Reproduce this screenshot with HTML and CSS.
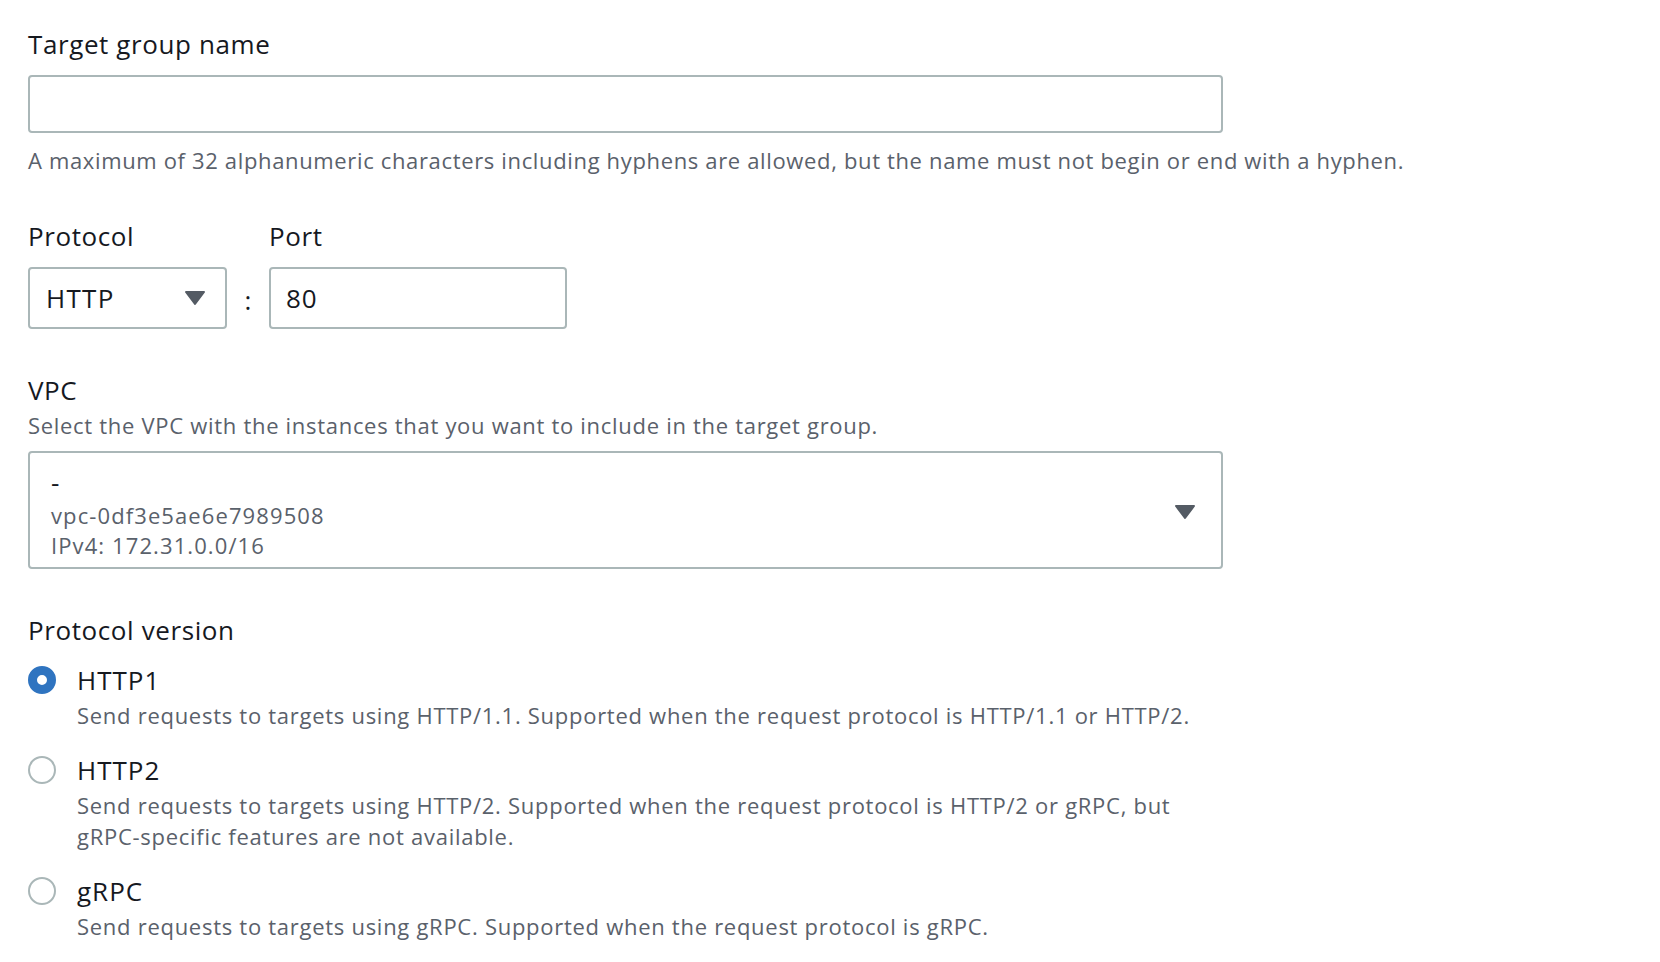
FILE: index.html
```html
<!DOCTYPE html>
<html lang="en">

<head>
    <meta charset="UTF-8">
    <meta name="viewport" content="width=device-width, initial-scale=1.0">
    <title>Target group</title>
    <link rel="stylesheet" href="styles.css">
</head>

<body>
    <div class="form">
        <div class="field">
            <label class="label" for="tg-name">Target group name</label>
            <input class="text-input name-input" id="tg-name" type="text">
            <p class="hint">A maximum of 32 alphanumeric characters including hyphens are allowed, but the name must not begin or end with a hyphen.</p>
        </div>

        <div class="field proto-port">
            <span class="label">Protocol</span>
            <span></span>
            <span class="label">Port</span>
            <div class="select proto-select">
                <span class="value">HTTP</span>
                <svg class="caret" width="22" height="16" viewBox="0 0 22 16"><path d="M2 2 H20 L11 14 Z" fill="#545b64" stroke="#545b64" stroke-width="2" stroke-linejoin="round"/></svg>
            </div>
            <span class="colon">:</span>
            <input class="text-input port-input" type="text" value="80">
        </div>

        <div class="field">
            <span class="label">VPC</span>
            <p class="desc">Select the VPC with the instances that you want to include in the target group.</p>
            <div class="select vpc-select">
                <div class="vpc-info">
                    <div class="vpc-name">-</div>
                    <div class="vpc-line">vpc-0df3e5ae6e7989508</div>
                    <div class="vpc-line">IPv4: 172.31.0.0/16</div>
                </div>
                <svg class="caret" width="22" height="16" viewBox="0 0 22 16"><path d="M2 2 H20 L11 14 Z" fill="#545b64" stroke="#545b64" stroke-width="2" stroke-linejoin="round"/></svg>
            </div>
        </div>

        <div class="field">
            <span class="label">Protocol version</span>
            <div class="radio-item">
                <span class="radio checked"></span>
                <div>
                    <div class="radio-label">HTTP1</div>
                    <p class="radio-desc">Send requests to targets using HTTP/1.1. Supported when the request protocol is HTTP/1.1 or HTTP/2.</p>
                </div>
            </div>
            <div class="radio-item">
                <span class="radio"></span>
                <div>
                    <div class="radio-label">HTTP2</div>
                    <p class="radio-desc">Send requests to targets using HTTP/2. Supported when the request protocol is HTTP/2 or gRPC, but<br>gRPC-specific features are not available.</p>
                </div>
            </div>
            <div class="radio-item">
                <span class="radio"></span>
                <div>
                    <div class="radio-label">gRPC</div>
                    <p class="radio-desc">Send requests to targets using gRPC. Supported when the request protocol is gRPC.</p>
                </div>
            </div>
        </div>
    </div>
</body>

</html>
```

FILE: styles.css
```css
body {
    margin: 0;
    padding: 28px 0 0 28px;
    background-color: #fff;
    font-family: "Open Sans", "Noto Sans", Arial, sans-serif;
    color: #16191f;
}

.form {
    width: 1500px;
}

.field {
    margin-bottom: 45px;
}

.label {
    display: block;
    font-size: 26px;
    line-height: 32px;
    letter-spacing: 0.6px;
    color: #16191f;
}

.text-input {
    box-sizing: border-box;
    display: block;
    font-family: inherit;
    font-size: 26px;
    letter-spacing: 1px;
    color: #16191f;
    border: 2px solid #aab7b8;
    border-radius: 4px;
    background: #fff;
    outline: none;
}

.name-input {
    width: 1195px;
    height: 58px;
    margin-top: 15px;
    padding: 0 17px;
}

.hint {
    margin: 12px 0 0;
    font-size: 22px;
    line-height: 30px;
    letter-spacing: 0.65px;
    color: #5a616b;
}

/* protocol + port row */
.proto-port {
    display: grid;
    grid-template-columns: 199px 42px 298px;
    row-gap: 15px;
}

.select {
    box-sizing: border-box;
    display: flex;
    align-items: center;
    justify-content: space-between;
    border: 2px solid #aab7b8;
    border-radius: 4px;
    background: #fff;
}

.proto-select {
    height: 62px;
    padding: 0 19px 0 16px;
}

.value {
    font-size: 26px;
    letter-spacing: 1.3px;
}

.colon {
    align-self: center;
    text-align: center;
    font-size: 26px;
    padding-top: 4px;
}

.port-input {
    height: 62px;
    padding: 0 15px;
    width: 298px;
}

.desc {
    margin: 4px 0 0;
    font-size: 22px;
    line-height: 30px;
    letter-spacing: 0.7px;
    color: #5a616b;
}

.vpc-select {
    width: 1195px;
    margin-top: 11px;
    padding: 11px 25px 7px 21px;
}

.vpc-name {
    font-size: 26px;
    line-height: 36px;
}

.vpc-line {
    font-size: 22px;
    line-height: 30px;
    letter-spacing: 1.1px;
    color: #5a616b;
}

/* radios */
.radio-item {
    display: flex;
    gap: 21px;
    margin-top: 23px;
}

.field > .label + .radio-item {
    margin-top: 18px;
}

.radio {
    box-sizing: border-box;
    flex: none;
    width: 28px;
    height: 28px;
    margin-top: 2px;
    border: 2px solid #aab7b8;
    border-radius: 50%;
    background: #fff;
}

.radio.checked {
    border: 9px solid #2f74c0;
}

.radio-label {
    font-size: 26px;
    line-height: 32px;
    letter-spacing: 1px;
}

.radio-desc {
    margin: 4px 0 0;
    font-size: 22px;
    line-height: 31px;
    letter-spacing: 0.72px;
    color: #5a616b;
}
```
